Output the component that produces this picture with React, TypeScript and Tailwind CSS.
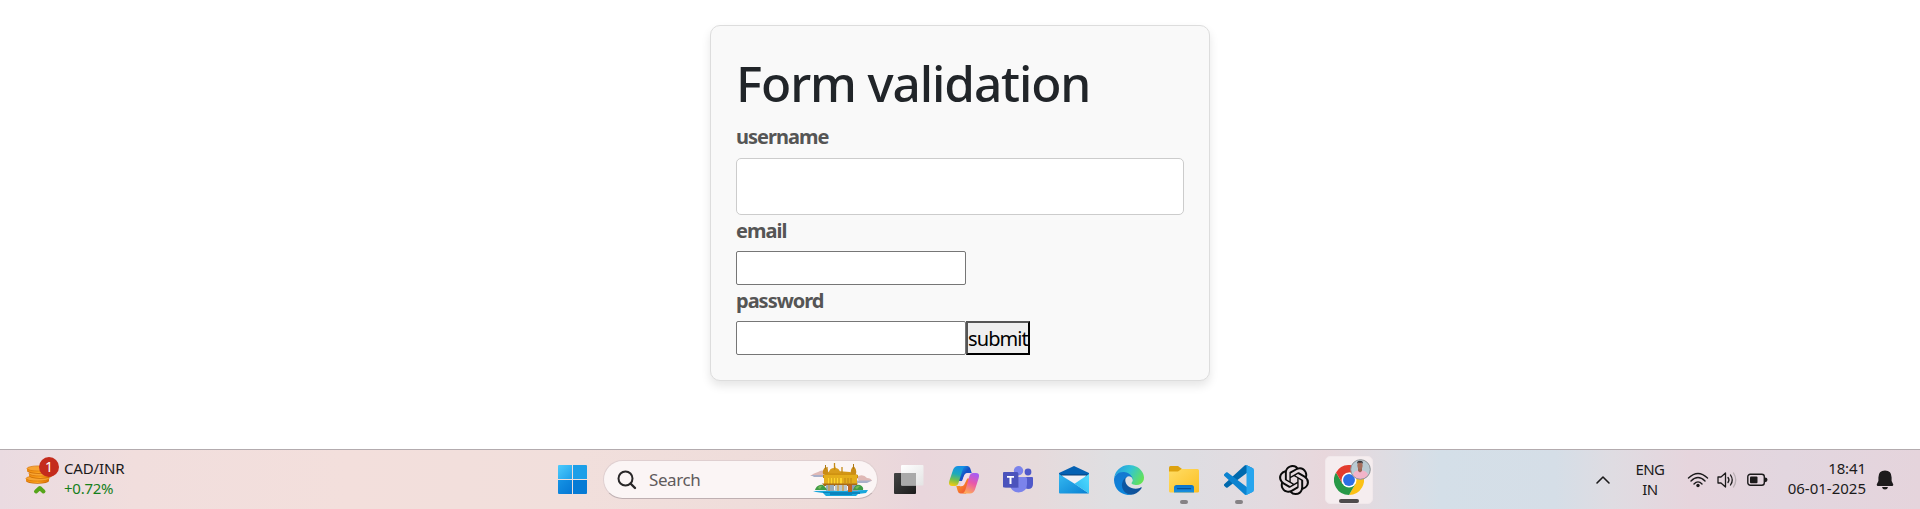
import React from "react";
import { SiOpenai } from "react-icons/si";

function CoinsIcon() {
  return (
    <svg width="36" height="40" viewBox="0 0 36 40">
      <defs>
        <linearGradient id="coin" x1="0" x2="1" y1="0" y2="0">
          <stop offset="0" stopColor="#ee8a10" />
          <stop offset=".5" stopColor="#ffa51f" />
          <stop offset="1" stopColor="#dd6f00" />
        </linearGradient>
      </defs>
      {[[13.5, 21.5], [16.5, 16.5], [14.5, 11.5]].map(([x, y]) => (
        <g key={y}>
          <ellipse cx={x} cy={y + 2.5} rx="11.5" ry="2.8" fill="#c96a05" />
          <rect x={x - 11.5} y={y} width="23" height="2.500" fill="url(#coin)" />
          <ellipse cx={x} cy={y + 1.7} rx="11.5" ry="2.8" fill="url(#coin)" />
          <ellipse cx={x} cy={y} rx="11.5" ry="2.6" fill="#f7a433" stroke="#d97706" strokeWidth=".7" />
        </g>
      ))}
      <path d="M12 34.500L15.800 31L19.500 34.500" fill="none" stroke="#56a51a" strokeWidth="4" strokeLinejoin="round" strokeLinecap="round" />
      <circle cx="25" cy="10" r="10" fill="#c42b1c" />
    </svg>
  );
}

function StartIcon() {
  return (
    <svg width="29" height="29" viewBox="0 0 29 29">
      <defs>
        <linearGradient id="win" x1="0" y1="0" x2="1" y2="1">
          <stop offset="0" stopColor="#4ccbfd" />
          <stop offset="1" stopColor="#1fa0ea" />
        </linearGradient>
        <linearGradient id="winb" x1="0" y1="0" x2="1" y2="1">
          <stop offset="0" stopColor="#1593e4" />
          <stop offset="1" stopColor="#0577d4" />
        </linearGradient>
      </defs>
      <path d="M1 0H14V14H0V1Q0 0 1 0Z" fill="url(#win)" />
      <path d="M15 0H28Q29 0 29 1V14H15Z" fill="#1c9fe8" />
      <path d="M0 15H14V29H1Q0 29 0 28Z" fill="url(#winb)" />
      <path d="M15 15H29V28Q29 29 28 29H15Z" fill="#067bd5" />
    </svg>
  );
}

function TempleIcon() {
  return (
    <svg width="63" height="34" viewBox="0 0 63 34">
      <defs>
        <linearGradient id="gold" x1="0" x2="0" y1="0" y2="1">
          <stop offset="0" stopColor="#e0a81e" />
          <stop offset="1" stopColor="#c98a0c" />
        </linearGradient>
      </defs>
      <path d="M0 13Q4 10 8 9Q12 6 17 9V13Z" fill="#dfb9b6" />
      <path d="M1 12H16V14H4Z" fill="#a9b0c9" />
      <path d="M46 14Q53 10 57 15Q61 15 62 18L50 19Z" fill="#dfb9b6" />
      <path d="M47 17.500H62L57 20H47Z" fill="#a9b0c9" />
      <path d="M3 28L58 27L56 30L48 31L46 33H16L13 30L6 29Z" fill="#18a7dc" />
      <path d="M13 29H50V31H42V32H20V30H13Z" fill="#0b83bd" />
      <path d="M13 12L17 10L20 8H24L25 3L27 8L40 9L48 12V15H13Z" fill="url(#gold)" />
      <path d="M19 10Q19 5 24.500 5Q30 5 30 10Z" fill="#d99d1b" />
      <path d="M24.500 0V7M17 4V10M32 4V10" stroke="#c48a18" strokeWidth="1.300" />
      <path d="M13 11Q12 7 15.500 4Q19 7 18 11ZM41 11Q40 6 43.500 3Q47 6 46 11Z" fill="#c98c18" />
      <path d="M15.500 2V6M43.500 1V6" stroke="#ad7912" />
      <rect x="14" y="12" width="33" height="9" fill="#e4ad1c" />
      <rect x="18" y="15" width="14" height="6" fill="#ffd42b" />
      <path d="M20 15v6M23 15v6M26 15v6M29 15v6M35 15v5M38 15v5M41 15v5" stroke="#bb8117" strokeWidth=".9" />
      <path d="M12 20.500H48L46 23H14Z" fill="#a96b16" />
      <rect x="16" y="22" width="8" height="6" fill="#99aab8" />
      <rect x="25" y="22" width="12" height="6" fill="#bcc5c9" />
      <rect x="38" y="22" width="4" height="7" fill="#bd641f" />
      <rect x="42" y="22" width="6" height="6" fill="#8e9db2" />
      <path d="M19 22v6M28 22v6M33 22v6" stroke="#d59a32" strokeWidth="1.200" />
      <path d="M5 27Q6 23 10 22Q14 21 17 27ZM43 27Q45 21 50 22Q54 24 53 27Z" fill="#3f9b45" />
      <path d="M8 25Q9 22 12 23L10 26ZM45 25Q47 22 50 23L47 26Z" fill="#75b957" />
    </svg>
  );
}

function TaskViewIcon() {
  return (
    <svg width="31" height="29" viewBox="0 0 31 29">
      <defs>
        <linearGradient id="tv" x1="0" y1="0" x2="1" y2="1">
          <stop offset="0" stopColor="#444" />
          <stop offset="1" stopColor="#1c1c1c" />
        </linearGradient>
        <linearGradient id="tvw" x1="0" y1="0" x2="1" y2="1">
          <stop offset="0" stopColor="#fff" />
          <stop offset="1" stopColor="#e4e4e4" />
        </linearGradient>
      </defs>
      <rect x="1" y="8" width="22" height="21" rx="1" fill="url(#tv)" />
      <rect x="8" y="0" width="22.500" height="20.500" rx="1" fill="url(#tvw)" />
      <path d="M8 8H23V20.500H9Q8 20.500 8 19.500Z" fill="#aaa" />
    </svg>
  );
}

function CopilotIcon() {
  return (
    <svg width="30" height="28" viewBox="0 0 30 28">
      <defs>
        <linearGradient id="cpA" x1=".5" y1="0" x2=".3" y2="1">
          <stop offset="0" stopColor="#1590e8" />
          <stop offset=".4" stopColor="#1eaaba" />
          <stop offset=".7" stopColor="#73bf4d" />
          <stop offset="1" stopColor="#f4cb12" />
        </linearGradient>
        <linearGradient id="cpB" x1=".7" y1="0" x2=".3" y2="1">
          <stop offset="0" stopColor="#a65cf3" />
          <stop offset=".45" stopColor="#e957aa" />
          <stop offset="1" stopColor="#ffac55" />
        </linearGradient>
        <linearGradient id="cpC" x1="0" y1="0" x2="1" y2="1">
          <stop offset="0" stopColor="#1bb2f0" />
          <stop offset=".5" stopColor="#1550c6" />
          <stop offset="1" stopColor="#2158dd" />
        </linearGradient>
        <linearGradient id="cpD" x1="0" y1="0" x2="1" y2="1">
          <stop offset="0" stopColor="#ffb21b" />
          <stop offset="1" stopColor="#ed3d3d" />
        </linearGradient>
      </defs>
      <path d="M13 0H18.500Q20.500 0 21.300 2.500L22.700 7H19Q16 7 15 10L13.500 15H9L11 4Z" fill="url(#cpC)" />
      <path d="M17 27.500H11.500Q9.500 27.500 8.700 25L7.300 20H11Q14 20 15 17L16.500 12.500H21L19 23Z" fill="url(#cpD)" />
      <path d="M9 0H17Q14.500 .5 13.500 4L9.500 17Q8.500 20 6 20H3Q-1 20 .3 15L4 4Q5.500 0 9 0Z" fill="url(#cpA)" />
      <path d="M21 27.500H13Q15.500 27 16.500 23.500L20.500 10Q21.500 7 24 7H27Q31 7 29.700 12L26 23.500Q24.500 27.500 21 27.500Z" fill="url(#cpB)" />
      <path d="M15 10Q16 7 19 7H21L15 19Q14 20.500 11 20.300Z" fill="#f3dce8" />
    </svg>
  );
}

function TeamsIcon() {
  return (
    <svg width="31" height="27" viewBox="0 0 31 27">
      <circle cx="25" cy="6" r="3.400" fill="#5059c9" />
      <path d="M22 11H29Q30 11 30 12V18Q30 23 25 23L21 22Z" fill="#5059c9" />
      <circle cx="15.500" cy="4.700" r="4.700" fill="#7b83eb" />
      <path d="M8 11H22.500Q24 11 24 12.500V18Q24 26 15.500 26.500Q8 26 7 19Z" fill="#7b83eb" />
      <rect x="2" y="7" width="14" height="15" rx="1" fill="#3d4299" opacity=".3" />
      <rect x="0" y="6" width="15" height="15.500" rx="1" fill="#4b53bc" />
      <path d="M4 10H11V11.800H8.500V18H6.500V11.800H4Z" fill="#fff" />
    </svg>
  );
}

function MailIcon() {
  return (
    <svg width="30" height="28" viewBox="0 0 30 28">
      <defs>
        <linearGradient id="ml" x1="0" y1="0" x2="1" y2="1">
          <stop offset="0" stopColor="#35b9f1" />
          <stop offset="1" stopColor="#087fd2" />
        </linearGradient>
        <linearGradient id="mlr" x1="1" y1="0" x2="0" y2="1">
          <stop offset="0" stopColor="#52dcff" />
          <stop offset="1" stopColor="#29b4ef" />
        </linearGradient>
      </defs>
      <path d="M0 7L15 0L30 7V11H0Z" fill="#0561b3" />
      <path d="M1 8.500H29L28 11H3Z" fill="#083d75" />
      <path d="M2.500 9.500H27.500L20 18H10Z" fill="#f1f0f5" />
      <path d="M0 8L16 18L30 27.500H1Q0 27.500 0 26.500Z" fill="url(#ml)" />
      <path d="M30 8V27.500L15.500 17.700Z" fill="url(#mlr)" />
    </svg>
  );
}

function EdgeIcon() {
  return (
    <svg width="30" height="30" viewBox="0 0 256 256">
      <defs>
        <linearGradient id="edA" x1="0" x2="1" y1="0" y2="0">
          <stop offset="0" stopColor="#0c59a4" />
          <stop offset="1" stopColor="#104f97" />
        </linearGradient>
        <linearGradient id="edB" x1="0" x2="0" y1="0" y2="1">
          <stop offset="0" stopColor="#1577cf" />
          <stop offset="1" stopColor="#0b86dc" />
        </linearGradient>
        <linearGradient id="edC" x1="0" x2="1" y1=".3" y2=".7">
          <stop offset="0" stopColor="#249de2" />
          <stop offset=".45" stopColor="#32c4d4" />
          <stop offset="1" stopColor="#67e450" />
        </linearGradient>
      </defs>
      <path fill="url(#edA)" d="M231 190.500c-3.400 1.800-6.900 3.400-10.500 4.700a101.500 101.500 0 01-35.900 6.500c-47.300 0-88.500-32.500-88.500-74.300a31.500 31.500 0 0116.400-27.300c-42.800 1.800-53.800 46.400-53.800 72.500 0 74 68.100 81.400 82.800 81.400 7.900 0 19.800-2.300 27-4.600l1.300-.4a128.300 128.300 0 0066.600-52.800 4 4 0 00-5.400-5.700z" />
      <path fill="url(#edB)" d="M105.700 241.400a79.200 79.200 0 01-22.700-21.300 80.700 80.700 0 0129.500-120c3.200-1.500 8.500-4.100 15.600-4a32.400 32.400 0 0125.700 13 31.900 31.900 0 016.300 18.700c0-.2 24.500-79.600-80-79.600-43.900 0-80 41.600-80 78.200a130.200 130.200 0 0012.100 56 128 128 0 00156.400 67 75.500 75.500 0 01-62.800-8z" />
      <path fill="url(#edC)" d="M152.300 148.900c-.8 1-3.300 2.500-3.300 5.700 0 2.600 1.700 5.100 4.700 7.200 14.400 10 41.500 8.700 41.600 8.700 10.700 0 21.100-2.900 30.300-8.300a61.400 61.400 0 0030.400-52.900c.3-22.400-8-37.300-11.300-43.900C223.500 23.900 177.700 0 128 0A128 128 0 000 126.200c.5-36.500 36.800-66 80-66 3.500 0 23.500.3 42 10.100a72.600 72.600 0 0130.900 29.300c6.100 10.600 7.200 24.100 7.200 29.500 0 5.400-2.700 13.300-7.900 19.900z" />
    </svg>
  );
}

function FolderIcon() {
  return (
    <svg width="30" height="27" viewBox="0 0 30 27">
      <defs>
        <linearGradient id="fo" x1="0" y1="0" x2="1" y2="1">
          <stop offset="0" stopColor="#ffdd66" />
          <stop offset="1" stopColor="#fcbf22" />
        </linearGradient>
        <linearGradient id="fb" x1="0" y1="0" x2="0" y2="1">
          <stop offset="0" stopColor="#0c72cb" />
          <stop offset="1" stopColor="#1790df" />
        </linearGradient>
      </defs>
      <path d="M0 1.500Q0 0 1.500 0H9L13 3V8H0Z" fill="#dda20f" />
      <path d="M0 5.500H9L12.500 3H28.500Q30 3 30 4.500V25.500Q30 26.500 28.500 26.500H1.500Q0 26.500 0 25Z" fill="url(#fo)" />
      <path d="M5 26.500V21.500Q5 19 7.500 19H22.500Q25 19 25 21.500V26.500Z" fill="url(#fb)" />
      <path d="M8.500 22.700H21.500" stroke="#084f97" strokeWidth="1.200" strokeLinecap="round" />
    </svg>
  );
}

function CodeIcon() {
  return (
    <svg width="30" height="30" viewBox="0 0 100 100">
      <path fill="#0069ad" d="M96.460 10.800L75.860.88C73.470-.27 70.620.21 68.750 2.080L1.300 63.580C-.52 65.240-.51 68.090 1.300 69.750L6.810 74.750C8.300 76.100 10.530 76.200 12.130 74.990L93.360 13.370C96.090 11.300 100 13.250 100 16.670V16.430C100 14.030 98.620 11.840 96.460 10.800Z" />
      <path fill="#0c83d0" d="M96.460 89.200L75.860 99.120C73.470 100.270 70.620 99.790 68.750 97.920L1.300 36.420C-.52 34.760-.51 31.910 1.300 30.250L6.810 25.250C8.300 23.900 10.530 23.800 12.130 25.010L93.360 86.630C96.090 88.700 100 86.750 100 83.330V83.570C100 85.970 98.620 88.160 96.460 89.200Z" />
      <path fill="#27a5ee" d="M75.860 99.130C73.470 100.270 70.620 99.790 68.750 97.920C71.060 100.220 75 98.590 75 95.330V4.670C75 1.410 71.060-.22 68.750 2.080C70.620.21 73.470-.27 75.860.87L96.460 10.780C98.620 11.820 100 14.010 100 16.410V83.590C100 85.990 98.620 88.180 96.460 89.220L75.860 99.130Z" />
    </svg>
  );
}

function ChromeIcon() {
  return (
    <svg width="30" height="30" viewBox="0 0 48 48">
      <path d="M24 12H44.800A24 24 0 0 1 24 48L34.400 30Z" fill="#fbc116" />
      <path d="M34.400 30L24 48A24 24 0 0 1 3.200 12L13.600 30Z" fill="#279847" />
      <path d="M3.200 12A24 24 0 0 1 44.800 12H24L13.600 30Z" fill="#e33b2e" />
      <circle cx="24" cy="24" r="12" fill="#fff" />
      <circle cx="24" cy="24" r="9.500" fill="#2c6fe4" />
    </svg>
  );
}

function ProfileBadge() {
  return (
    <svg className="absolute left-[24px] top-[2px]" width="21" height="21" viewBox="0 0 21 21">
      <defs>
        <clipPath id="face"><circle cx="10.500" cy="10.500" r="9.800" /></clipPath>
      </defs>
      <g clipPath="url(#face)">
        <rect width="21" height="21" fill="#b9cbd3" />
        <path d="M3 21V17Q3 12 8 11.500H12Q18 12 18 17V21Z" fill="#f2b4c9" />
        <path d="M8 8H12V12L10 13.500L8 12Z" fill="#9b6655" />
        <ellipse cx="10" cy="6.500" rx="2.600" ry="3.600" fill="#a56f5d" />
        <path d="M7.200 5Q6.500 1.800 10 1.800Q13.500 1.800 12.800 5L12 3.800H8Z" fill="#3b3638" />
      </g>
      <circle cx="10.500" cy="10.500" r="9.800" fill="none" stroke="#8d9194" strokeWidth="1" />
    </svg>
  );
}

function Slot({ children, mark }: { children: React.ReactNode; mark?: boolean }) {
  return (
    <div className="relative flex h-[60px] w-[55px] shrink-0 items-center justify-center">
      {children}
      {mark && <span className="absolute bottom-[6px] left-[23.5px] h-[4px] w-[8px] rounded-full bg-[#858285]" />}
    </div>
  );
}

function Taskbar() {
  return (
    <footer className="flex h-[60px] w-full border-t border-[#b3abae] bg-[linear-gradient(90deg,#eadbe1_0%,#f1dedd_7%,#f3dfdc_18%,#f1dfdc_30%,#eedcda_43%,#e9d6dc_48%,#e6dadc_54%,#dfdfe2_58%,#dedde2_62%,#e3dbe0_66%,#e8d7dc_69%,#dfdce2_72%,#d4dfe8_75%,#d5dee7_81%,#dfdce2_84%,#e6d5dd_88%,#e2d6df_93%,#e5d4dc_100%)] text-[#1b1a1b]">
      <div className="flex w-[545px] pl-[24px] pt-[7px]">
        <div className="relative h-[40px] w-[36px]">
          <CoinsIcon />
          <span className="absolute left-[15px] top-0 w-[20px] text-center text-[14px] leading-[20px] text-white">1</span>
        </div>
        <div className="ml-[4px] pt-px text-[15px] leading-[20px]">
          <div className="tracking-[-0.15px]">CAD/INR</div>
          <div className="tracking-[-0.25px] text-[#16801b]">+0.72%</div>
        </div>
      </div>

      <div className="flex w-[833px] shrink-0 items-center">
        <div className="flex w-[58px] justify-center pr-[3px]"><StartIcon /></div>
        <div className="flex h-[39px] w-[275px] items-center rounded-full border border-[#dfcfd0] border-b-[#bfb0b2] bg-[#fbf5f5] pl-[13px]">
          <svg width="20" height="20" viewBox="0 0 20 20" fill="none" stroke="#292728" strokeWidth="2">
            <circle cx="8.500" cy="8.500" r="7" />
            <path d="M13.500 13.500L18 18" strokeWidth="2.400" strokeLinecap="round" />
          </svg>
          <span className="ml-[12px] text-[17px] leading-[22px] tracking-[-0.4px] text-[#5f5b5c]">Search</span>
          <span className="ml-auto mr-[4px]"><TempleIcon /></span>
        </div>
        <div className="ml-[3px] flex">
          <Slot><TaskViewIcon /></Slot>
          <Slot><CopilotIcon /></Slot>
          <Slot><TeamsIcon /></Slot>
          <Slot><MailIcon /></Slot>
          <Slot><EdgeIcon /></Slot>
          <Slot mark><FolderIcon /></Slot>
          <Slot mark><CodeIcon /></Slot>
          <Slot><SiOpenai size={30} color="#0b0b0b" /></Slot>
          <Slot>
            <div className="relative flex h-[48px] w-[48px] shrink-0 items-center justify-center rounded-[5px] border border-[#f1e8eb] bg-[#f5edef]">
              <ChromeIcon />
              <ProfileBadge />
              <span className="absolute bottom-0 left-[13px] h-[4px] w-[20px] rounded-full bg-[#4e4b4c]" />
            </div>
          </Slot>
        </div>
      </div>

      <div className="flex flex-1 items-center pl-[217px]">
        <svg width="16" height="10" viewBox="0 0 16 10" fill="none" stroke="#1b1a1b" strokeWidth="1.600" strokeLinecap="round" strokeLinejoin="round">
          <path d="M2 8L8 2L14 8" />
        </svg>
        <div className="ml-[21px] w-[36px] pb-px text-center text-[15px] leading-[20px] tracking-[-0.6px]">
          <div>ENG</div>
          <div>IN</div>
        </div>
        <svg className="ml-[19px]" width="22" height="16" viewBox="0 0 22 16" fill="none" stroke="#1b1a1b" strokeWidth="1.400" strokeLinecap="round">
          <path d="M1.500 6Q11-3 20.500 6M4 9Q11 2 18 9M7 12Q11 7.800 15 12" />
          <circle cx="11" cy="13.500" r="1.700" fill="#1b1a1b" stroke="none" />
        </svg>
        <svg className="ml-[8px]" width="21" height="18" viewBox="0 0 21 18" fill="none" stroke="#1b1a1b" strokeWidth="1.300" strokeLinecap="round" strokeLinejoin="round">
          <path d="M1 6H4L8.500 2V16L4 12H1Z" />
          <path d="M11 6.500Q13 9 11 11.500M13.500 4Q17 9 13.500 14" />
          <path d="M16.500 2Q21 9 16.500 16" stroke="#b9afb4" />
        </svg>
        <svg className="ml-[9px]" width="21" height="14" viewBox="0 0 21 14">
          <rect x=".8" y="1.300" width="16.500" height="11" rx="2.500" fill="none" stroke="#1b1a1b" strokeWidth="1.400" />
          <rect x="3" y="3.400" width="7.500" height="6.800" rx="1" fill="#1b1a1b" />
          <path d="M18 4.500Q20.500 4.500 20.500 6.800Q20.500 9.200 18 9.200Z" fill="#1b1a1b" />
        </svg>
        <div className="ml-[15px] w-[83px] pb-[4px] text-right text-[15px] leading-[20px]">
          <div className="tracking-[-0.1px]">18:41</div>
          <div className="whitespace-nowrap">06-01-2025</div>
        </div>
        <svg className="ml-[10px]" width="18" height="20" viewBox="0 0 18 20" fill="#1d1b1c">
          <path d="M9 .5Q15.600 .5 15.600 7.500V11L17.300 14.500Q17.300 16 16 16H2Q.7 16 .7 14.500L2.400 11V7.500Q2.400 .5 9 .5Z" />
          <path d="M6 17H12Q11.500 19.500 9 19.500Q6.500 19.500 6 17Z" />
        </svg>
      </div>
    </footer>
  );
}

const label = "block h-[30px] pt-px text-[20px] leading-[30px] font-bold tracking-[-1px] text-[#555555]";

export default function App() {
  return (
    <div className="flex h-[509px] w-full flex-col overflow-hidden bg-white font-['Noto_Sans','Open_Sans',sans-serif]">
      <main className="h-[449px] pt-[25px]">
        <form className="mx-auto h-[356px] w-[500px] rounded-[10px] border border-[#dddddd] bg-[#f9f9f9] px-[25px] pt-[25px] shadow-[0_5px_10px_rgba(0,0,0,0.1)]">
          <h1 className="h-[70px] whitespace-nowrap text-[49.5px] leading-[64px] font-medium tracking-[-1.1px] text-[#212529]">Form validation</h1>
          <label className={label} htmlFor="username">username</label>
          <input id="username" className="mt-[7px] block h-[57px] w-full rounded-[5px] border border-[#cccccc] bg-white" />
          <label className={label} htmlFor="email">email</label>
          <input id="email" className="mt-[6px] block h-[34px] w-[230px] rounded-[2px] border border-[#767676] bg-white" />
          <label className={label} htmlFor="password">password</label>
          <div className="mt-[6px] flex">
            <input id="password" type="password" className="h-[34px] w-[230px] rounded-[2px] border border-[#767676] bg-white" />
            <button type="button" className="h-[34px] w-[64px] border-2 border-t-[#555] border-r-black border-b-black border-l-[#555] bg-[#efefef] pt-[2px] text-left text-[20px] leading-[28px] tracking-[-0.9px] text-black">submit</button>
          </div>
        </form>
      </main>
      <Taskbar />
    </div>
  );
}
